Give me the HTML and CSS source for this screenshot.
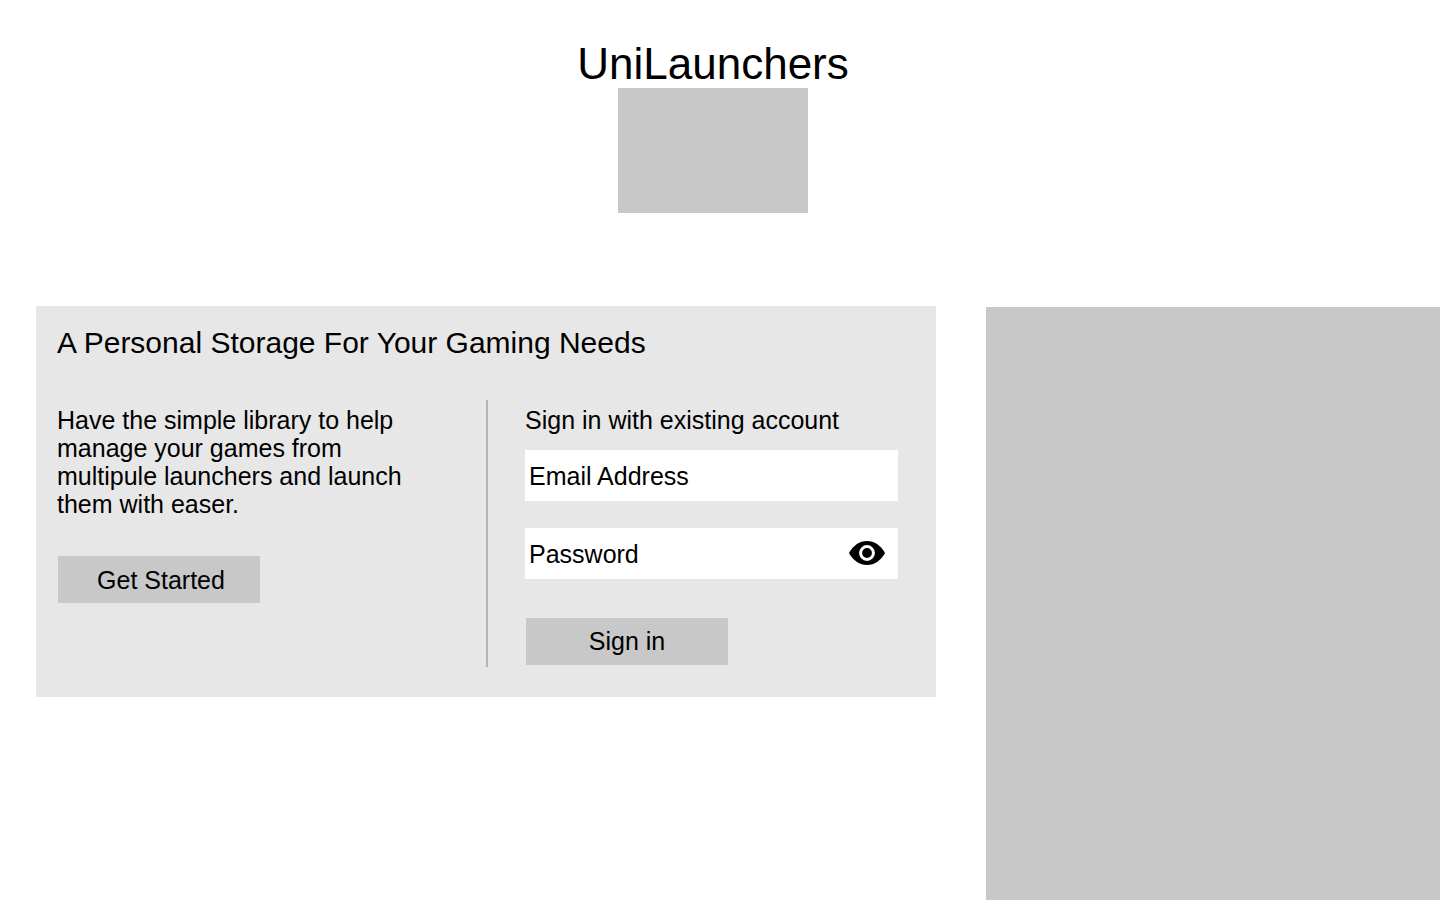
FILE: index.html
```html
<!DOCTYPE html>
<html lang="en">
<head>
<meta charset="utf-8">
<meta name="viewport" content="width=device-width, initial-scale=1">
<title>UniLaunchers</title>
<link rel="stylesheet" href="styles.css">
</head>
<body>
<div class="page">
  <header class="header">
    <h1 class="brand">UniLaunchers</h1>
    <div class="logo"></div>
  </header>
  <main class="main">
    <section class="panel">
      <h2 class="panel-title">A Personal Storage For Your Gaming Needs</h2>
      <div class="columns">
        <div class="intro">
          <p class="intro-text">Have the simple library to help manage your games from multipule launchers and launch them with easer.</p>
          <button class="button" type="button">Get Started</button>
        </div>
        <form class="signin">
          <h3 class="signin-title">Sign in with existing account</h3>
          <div class="field">
            <input class="input" type="email" placeholder="Email Address" aria-label="Email Address">
          </div>
          <div class="field">
            <input class="input" type="password" placeholder="Password" aria-label="Password">
            <button class="reveal" type="button" aria-label="Show password">
              <svg class="eye" viewBox="0 0 36 24" aria-hidden="true">
                <path d="M.5 11C4.500 4.500 10.500 0 18 0s13.500 4.500 17.500 11q.6 1 0 2C31.500 19.500 25.500 24 18 24S4.500 19.500.5 13q-.6-1 0-2z" fill="#000"/>
                <circle cx="18" cy="12" r="6.400" fill="#000" stroke="#fff" stroke-width="3"/>
              </svg>
            </button>
          </div>
          <button class="button button-signin" type="submit">Sign in</button>
        </form>
      </div>
    </section>
    <aside class="preview"></aside>
  </main>
</div>
</body>
</html>
```
FILE: styles.css
```css
* { box-sizing: border-box; }

body {
  margin: 0;
  background: #fff;
  color: #000;
  font-family: "Liberation Sans", Arial, sans-serif;
  font-size: 25px;
  line-height: 28px;
}

h1, h2, h3, p { margin: 0; font-weight: 400; }

.page {
  display: flex;
  flex-direction: column;
  min-height: 100vh;
}

.header {
  display: flex;
  flex-direction: column;
  align-items: center;
  padding: 40px 14px 93px 0;
}

.brand { font-size: 44px; line-height: 48px; }

.logo {
  width: 190px;
  height: 125px;
  background: #c8c8c8;
}

.main {
  display: grid;
  grid-template-columns: minmax(0, 900fr) minmax(0, 454fr);
  column-gap: 50px;
  flex: 1;
  align-items: start;
  padding-left: 36px;
}

.panel {
  padding: 19px 38px 30px 21px;
  background: #e7e7e7;
}

.panel-title { font-size: 30px; line-height: 36px; }

.columns {
  display: grid;
  grid-template-columns: minmax(0, 429fr) minmax(0, 412fr);
  margin-top: 39px;
}

.intro { padding: 6px 60px 0 0; }

.intro-text { margin-bottom: 38px; }

.button {
  display: block;
  width: 202px;
  height: 47px;
  margin-left: 1px;
  padding: 0 0 0 4px;
  border: 0;
  background: #c8c8c8;
  color: inherit;
  font: inherit;
  cursor: pointer;
}

.signin {
  padding: 6px 0 2px 37px;
  border-left: 2px solid #b3b3b3;
}

.signin-title { font-size: 25px; line-height: 28px; margin-bottom: 16px; }

.field {
  display: flex;
  height: 51px;
  margin-bottom: 27px;
  background: #fff;
}

.input {
  flex: 1;
  min-width: 0;
  padding: 0 4px;
  border: 0;
  background: transparent;
  color: inherit;
  font: inherit;
}

.input::placeholder { color: #000; opacity: 1; }

.reveal {
  padding: 0 13px 1px 0;
  border: 0;
  background: transparent;
  cursor: pointer;
}

.eye { display: block; width: 36px; height: 24px; }

.button-signin { margin-top: 39px; padding: 0 0 1px; }

.preview {
  align-self: stretch;
  margin-top: 1px;
  background: #c8c8c8;
}
```
